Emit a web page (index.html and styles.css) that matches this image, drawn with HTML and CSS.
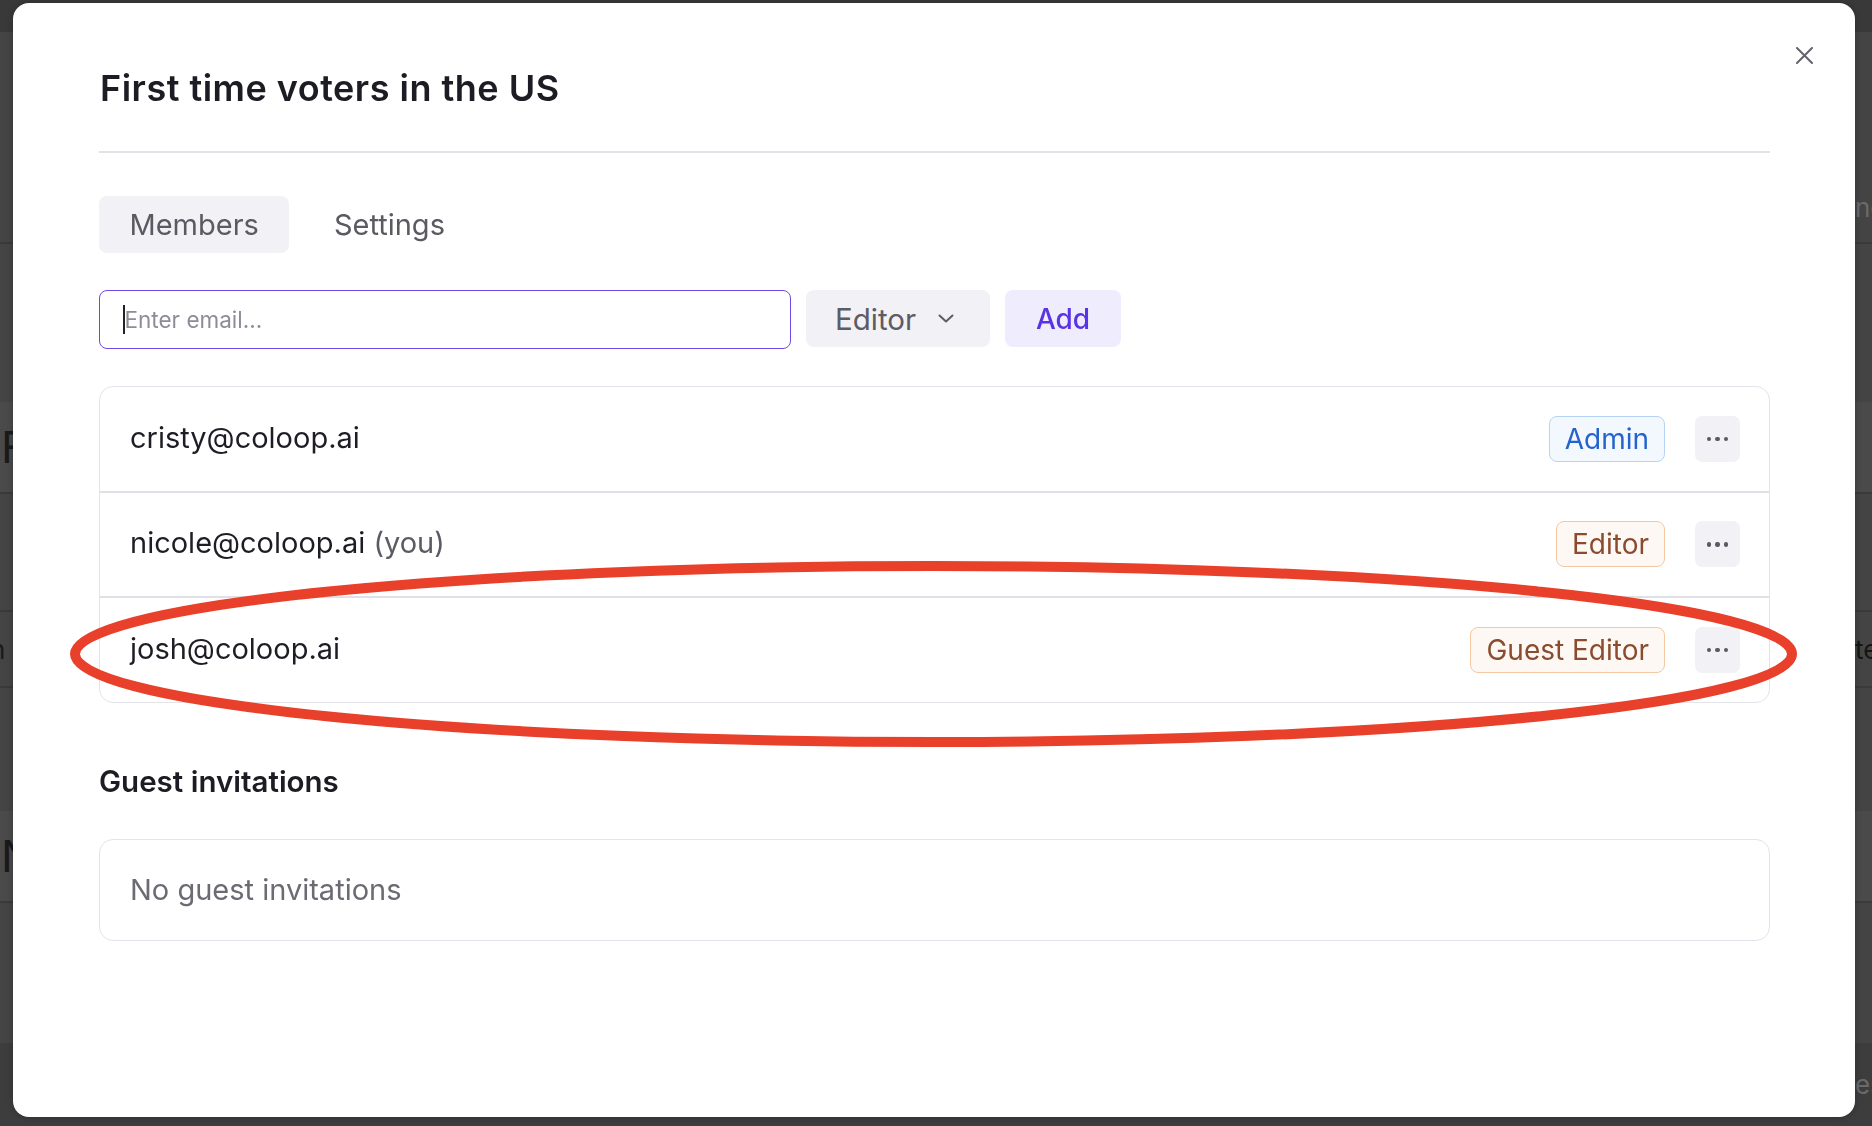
FILE: index.html
```html
<!DOCTYPE html>
<html lang="en">
<head>
<meta charset="utf-8">
<title>First time voters in the US</title>
<link rel="stylesheet" href="styles.css">
</head>
<body>
<div class="page">
  <div class="bg-row bg-top"></div>
  <div class="bg-row h140"></div>
  <div class="bg-row h70"><span class="bg-l"></span><span class="bg-r grey">ne</span></div>
  <div class="bg-row h41 line"></div>
  <div class="bg-row h119"></div>
  <div class="bg-row h90 band"><span class="bg-l big">F</span><span class="bg-r"></span></div>
  <div class="bg-row h118 line"></div>
  <div class="bg-row h76 line"><span class="bg-l small">h</span><span class="bg-r small">te</span></div>
  <div class="bg-row h29 line"></div>
  <div class="bg-row h96"></div>
  <div class="bg-row h90 band"><span class="bg-l big">N</span><span class="bg-r"></span></div>
  <div class="bg-row h142 line"></div>
  <div class="bg-row grow"><span class="bg-l"></span><span class="bg-r small grey">es</span></div>
</div>

<div class="overlay">
  <section class="modal" role="dialog" aria-labelledby="dlg-title">
    <button class="close" aria-label="Close">
      <svg width="17" height="17" viewBox="0 0 17 17"><path d="M1 1 L16 16 M16 1 L1 16" stroke="#64636b" stroke-width="2" stroke-linecap="round" fill="none"/></svg>
    </button>

    <header class="modal-head">
      <h1 id="dlg-title">First time voters in the US</h1>
    </header>

    <nav class="tabs">
      <button class="tab active">Members</button>
      <button class="tab">Settings</button>
    </nav>

    <div class="add-row">
      <label class="field"><span class="caret"></span><input type="email" placeholder="Enter email..."></label>
      <button class="role-select">Editor
        <svg width="16" height="9" viewBox="0 0 16 9"><path d="M1.5 1.5 L8 7.5 L14.5 1.5" stroke="#5d5b64" stroke-width="2" stroke-linecap="round" stroke-linejoin="round" fill="none"/></svg>
      </button>
      <button class="add-btn">Add</button>
    </div>

    <ul class="members">
      <li class="member">
        <span class="email">cristy@coloop.ai</span>
        <span class="badge admin">Admin</span>
        <button class="more" aria-label="More"><i></i><i></i><i></i></button>
      </li>
      <li class="member">
        <span class="email">nicole@coloop.ai <span class="you">(you)</span></span>
        <span class="badge editor">Editor</span>
        <button class="more" aria-label="More"><i></i><i></i><i></i></button>
      </li>
      <li class="member">
        <span class="email">josh@coloop.ai</span>
        <span class="badge editor">Guest Editor</span>
        <button class="more" aria-label="More"><i></i><i></i><i></i></button>
      </li>
    </ul>

    <h2 class="section-title">Guest invitations</h2>
    <div class="empty">No guest invitations</div>

    <svg class="annotation" width="1842" height="1114" viewBox="0 0 1842 1114" aria-hidden="true">
      <ellipse cx="920.5" cy="651" rx="858.5" ry="88" fill="none" stroke="#e8402a" stroke-width="10"/>
    </svg>
  </section>
</div>
</body>
</html>
```

FILE: styles.css
```css
* { box-sizing: border-box; }

html, body {
  margin: 0;
  height: 100%;
}

body {
  background: #444444;
  font-family: Inter, "Liberation Sans", sans-serif;
  overflow: hidden;
}

/* ---------- dimmed page behind the dialog ---------- */
.page {
  display: flex;
  flex-direction: column;
  height: 1126px;
}

.bg-row {
  display: flex;
  justify-content: space-between;
  align-items: center;
  flex: none;
  overflow: hidden;
}

.bg-row.line { border-top: 2px solid #3a3a3a; }
.bg-top { height: 32px; background: #393939; }
.h140 { height: 140px; }
.h70 { height: 70px; }
.h41 { height: 41px; }
.h119 { height: 119px; }
.h90 { height: 90px; }
.h118 { height: 118px; }
.h76 { height: 76px; }
.h29 { height: 29px; }
.h96 { height: 96px; }
.h142 { height: 142px; }
.grow { flex: 1; background: #3d3d3d; }
.band { background: #4a4a4a; }

.bg-l {
  color: #1a1a1a;
  white-space: nowrap;
}

.bg-r {
  width: 17px;
  overflow: hidden;
  white-space: nowrap;
  color: #151515;
  font-size: 26px;
}

.big { font-size: 44px; padding-left: 1px; }
.small { font-size: 26px; }
.grey { color: #6a6a6a; }
.bg-l.small { margin-left: -10px; }

/* ---------- dialog ---------- */
.overlay {
  position: fixed;
  inset: 0;
}

.modal {
  position: absolute;
  left: 13px;
  top: 3px;
  width: 1842px;
  height: 1114px;
  background: #ffffff;
  border-radius: 16px;
  padding: 63px 85px 0 86px;
  box-shadow: 0 0 6px rgba(0, 0, 0, 0.25);
}

.close {
  position: absolute;
  top: 44px;
  right: 42px;
  width: 17px;
  height: 17px;
  padding: 0;
  border: none;
  background: none;
  display: flex;
}

.modal-head {
  padding-bottom: 41px;
  border-bottom: 2px solid #e2e2e8;
}

.modal-head h1 {
  margin: 0 0 0 1px;
  font-size: 36px;
  line-height: 44px;
  font-weight: 600;
  color: #1d1c24;
  letter-spacing: 0.5px;
}

.tabs {
  margin-top: 43px;
  display: flex;
  gap: 14px;
}

.tab {
  height: 57px;
  padding: 0 30.5px;
  border: none;
  border-radius: 8px;
  background: transparent;
  font-family: inherit;
  font-size: 29px;
  color: #5b5a62;
}

.tab.active { background: #f2f1f6; }

.add-row {
  margin-top: 37px;
  display: flex;
  align-items: flex-start;
  gap: 15px;
}

.field {
  width: 692px;
  height: 59px;
  border: 1.5px solid #7148e8;
  border-radius: 8px;
  padding-left: 22.5px;
  display: flex;
  align-items: center;
}

.caret {
  width: 2px;
  height: 29px;
  background: #222126;
  flex: none;
}

.field input {
  flex: 1;
  border: none;
  outline: none;
  background: transparent;
  padding: 0;
  font-family: inherit;
  font-size: 22.5px;
  color: #1d1c24;
}

.field input::placeholder { color: #8e8c96; }

.role-select {
  width: 184px;
  height: 57px;
  border: none;
  border-radius: 8px;
  background: #f2f1f6;
  padding: 0 36px 0 29px;
  display: flex;
  align-items: center;
  justify-content: space-between;
  font-family: inherit;
  font-size: 29.5px;
  color: #5d5b64;
}

.add-btn {
  width: 116px;
  height: 57px;
  border: none;
  border-radius: 8px;
  background: #efedfd;
  font-family: inherit;
  font-size: 28px;
  font-weight: 500;
  color: #5a33e4;
}

.members {
  list-style: none;
  margin: 37px 0 0;
  padding: 0;
  border: 1px solid #e3e3ea;
  border-radius: 14px;
}

.member {
  box-sizing: content-box;
  height: 103.5px;
  display: flex;
  align-items: center;
  padding: 0 29px 0 30px;
}

.member + .member { border-top: 2px solid #e0e0e7; }

.email {
  flex: 1;
  font-size: 29px;
  line-height: 34px;
  padding-bottom: 2px;
  color: #1e1d25;
}

.you { color: #5c5a63; }

.badge {
  height: 46px;
  padding: 0 15px;
  border: 1px solid;
  border-radius: 8px;
  display: flex;
  align-items: center;
  font-size: 28px;
  margin-right: 30px;
}

.badge.admin {
  color: #2563cc;
  border-color: #b4d3f5;
  background: #f3f8ff;
}

.badge.editor {
  color: #8a4b2e;
  border-color: #f3c8a2;
  background: #fdf8f4;
}

.more {
  width: 45px;
  height: 46px;
  border: none;
  border-radius: 7px;
  background: #f2f1f6;
  padding: 0;
  display: flex;
  align-items: center;
  justify-content: center;
  gap: 4px;
}

.more i {
  width: 4.5px;
  height: 4.5px;
  border-radius: 50%;
  background: #5a5862;
}

.section-title {
  margin: 60px 0 0;
  font-size: 29.5px;
  line-height: 36px;
  font-weight: 600;
  color: #1d1c24;
}

.empty {
  margin-top: 40px;
  height: 102px;
  border: 1px solid #e3e3ea;
  border-radius: 14px;
  padding-left: 30px;
  display: flex;
  align-items: center;
  font-size: 29px;
  color: #6c6a73;
}

.annotation {
  position: absolute;
  left: 0;
  top: 0;
  pointer-events: none;
}
```
